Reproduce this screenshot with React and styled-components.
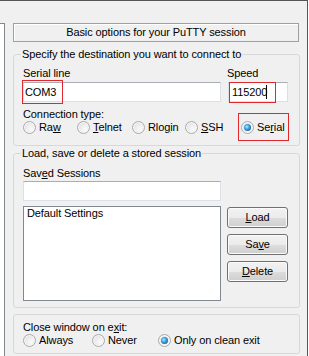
import styled, { createGlobalStyle } from "styled-components";

const GlobalStyle = createGlobalStyle`
  html, body {
    margin: 0;
    padding: 0;
    background: #ffffff;
  }
  body {
    font-family: "Liberation Sans", Arial, sans-serif;
    font-size: 11px;
    letter-spacing: -0.1px;
    color: #000;
  }
`;

const Frame = styled.div`
  width: 307px;
  height: 355px;
  background: #f0f0f0;
  border-top: 1px solid #555555;
  border-right: 1px solid #555555;
  display: flex;
  overflow: hidden;
`;

const TreePane = styled.div`
  width: 4px;
  margin-top: 22px;
  background: #ffffff;
  border-top: 1px solid #828790;
  border-right: 1px solid #828790;
`;

const Panel = styled.div`
  padding: 22px 0 0 8px;
  width: 287px;
`;

const Header = styled.div`
  width: 286px;
  height: 19px;
  box-sizing: border-box;
  border: 1px solid #a0a0a0;
  box-shadow: inset 1px 1px 0 #ffffff;
  line-height: 17px;
  text-align: center;
`;

const Group = styled.fieldset`
  margin: ${(p) => p.$top}px 0 0 0;
  width: 287px;
  box-sizing: border-box;
  border: 1px solid #d5d9dc;
  border-radius: 3px;
  padding: ${(p) => p.$pt}px 0 ${(p) => p.$pb}px 9px;
  min-inline-size: 0;
`;

const Legend = styled.legend`
  padding: 0 1px;
  margin-left: -2px;
  line-height: 13px;
`;

const Label = styled.div`
  line-height: 13px;
  margin-top: ${(p) => p.$top || 0}px;
`;

const FieldRow = styled.div`
  display: grid;
  grid-template-columns: 198px 60px;
  column-gap: 7px;
`;

const TextBox = styled.div`
  box-sizing: border-box;
  height: 20px;
  margin-top: ${(p) => p.$top || 0}px;
  width: ${(p) => p.$w || 198}px;
  background: #ffffff;
  border: 1px solid #dbdfe6;
  border-top-color: #abadb3;
  display: flex;
  align-items: center;
`;

const Mark = styled.span`
  box-sizing: border-box;
  display: inline-flex;
  align-items: center;
  flex-shrink: 0;
  border: 1px solid #e0282e;
  width: ${(p) => p.$w}px;
  height: ${(p) => p.$h}px;
  margin-left: ${(p) => p.$ml || 0}px;
  padding-left: 2px;
`;

const Caret = styled.span`
  display: inline-block;
  width: 1px;
  height: 14px;
  background: #000;
  margin-left: -1px;
`;

const RadioRow = styled.div`
  display: grid;
  grid-template-columns: ${(p) => p.$cols};
  line-height: 13px;
  height: 13px;
`;

const RadioItem = styled.span`
  display: inline-flex;
  align-items: center;
  gap: 3px;
  white-space: nowrap;
`;

const SerialMark = styled.span`
  display: inline-flex;
  align-items: center;
  border: 1px solid #e0282e;
  margin: -8px 0 -7px -3px;
  padding: 7px 0 6px 2px;
  width: 47px;
`;

const RadioCircle = styled.span`
  width: 13px;
  height: 13px;
  box-sizing: border-box;
  border-radius: 50%;
  border: 1px solid #a9abad;
  background: radial-gradient(circle at 65% 65%, #fbfbfb 0%, #e9e9e9 55%, #d6d6d6 100%);
  box-shadow: inset 0 0 0 1px #f7f7f7;
  display: inline-flex;
  align-items: center;
  justify-content: center;
  flex-shrink: 0;

  &::after {
    content: "";
    display: ${(p) => (p.$checked ? "block" : "none")};
    width: 7px;
    height: 7px;
    border-radius: 50%;
    background: radial-gradient(circle at 40% 40%, #b8ecff 0%, #3a9ee0 40%, #0c3e74 100%);
  }
`;

const ListRow = styled.div`
  display: grid;
  grid-template-columns: 198px 61px;
  column-gap: 6px;
  margin-top: 5px;
`;

const ListBox = styled.div`
  box-sizing: border-box;
  height: 95px;
  background: #ffffff;
  border: 1px solid #828790;
  padding: 0 0 0 3px;
  line-height: 13px;
`;

const Buttons = styled.div`
  display: flex;
  flex-direction: column;
  gap: 6px;
  margin-top: 1px;
`;

const Button = styled.button`
  box-sizing: border-box;
  height: 21px;
  width: 61px;
  padding: 0;
  border: 1px solid #707070;
  border-radius: 3px;
  background: linear-gradient(#f2f2f2 0%, #ebebeb 50%, #dddddd 51%, #cfcfcf 100%);
  box-shadow: inset 0 0 0 1px #fbfbfb;
  font: inherit;
  letter-spacing: inherit;
  color: #000;
  line-height: 13px;
`;

function Radio({ label, checked }) {
  return (
    <RadioItem>
      <RadioCircle $checked={checked} />
      <span>{label}</span>
    </RadioItem>
  );
}

export default function App() {
  return (
    <>
      <GlobalStyle />
      <Frame>
        <TreePane />
        <Panel>
          <Header>Basic options for your PuTTY session</Header>

          <Group $top={6} $pt={6} $pb={11}>
            <Legend>Specify the destination you want to connect to</Legend>
            <FieldRow>
              <Label>Serial line</Label>
              <Label style={{ marginLeft: -1 }}>Speed</Label>
              <TextBox $top={2}>
                <Mark $w={41} $h={24} $ml={-2}>COM3</Mark>
              </TextBox>
              <TextBox $top={2} $w={60}>
                <Mark $w={47} $h={21}>
                  115200
                  <Caret />
                </Mark>
              </TextBox>
            </FieldRow>
            <Label $top={6}>Connection type:</Label>
            <RadioRow $cols="54px 55px 53px 56px auto">
              <Radio label={<>Ra<u>w</u></>} />
              <Radio label={<><u>T</u>elnet</>} />
              <Radio label={<>Rlo<u>g</u>in</>} />
              <Radio label={<><u>S</u>SH</>} />
              <SerialMark>
                <Radio checked label={<>Se<u>r</u>ial</>} />
              </SerialMark>
            </RadioRow>
          </Group>

          <Group $top={1} $pt={7} $pb={6}>
            <Legend>Load, save or delete a stored session</Legend>
            <Label>
              Sav<u>e</u>d Sessions
            </Label>
            <TextBox $top={1} />
            <ListRow>
              <ListBox>Default Settings</ListBox>
              <Buttons>
                <Button>
                  <u>L</u>oad
                </Button>
                <Button>
                  Sa<u>v</u>e
                </Button>
                <Button>
                  <u>D</u>elete
                </Button>
              </Buttons>
            </ListRow>
          </Group>

          <Group $top={6} $pt={6} $pb={6}>
            <Label>
              Close window on e<u>x</u>it:
            </Label>
            <RadioRow $cols="69px 66px auto">
              <Radio label="Always" />
              <Radio label="Never" />
              <Radio checked label="Only on clean exit" />
            </RadioRow>
          </Group>
        </Panel>
      </Frame>
    </>
  );
}
